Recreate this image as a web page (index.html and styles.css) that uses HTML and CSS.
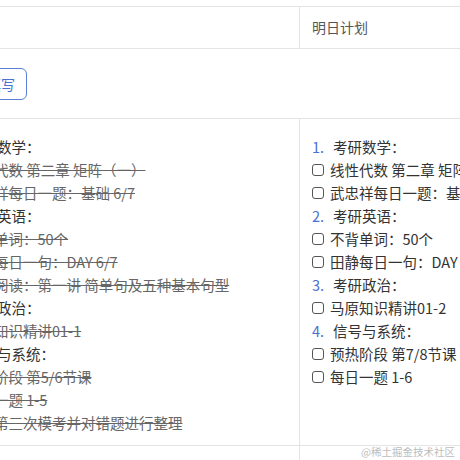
FILE: index.html
```html
<!DOCTYPE html>
<html lang="zh-CN">
<head>
<meta charset="utf-8">
<title>计划</title>
<link rel="stylesheet" href="styles.css">
</head>
<body>
<div class="page">
  <div class="plan-table">
    <div class="cell head left">已完成</div>
    <div class="cell head right">明日计划</div>

    <div class="cell action">
      <button class="btn" type="button">开始填写</button>
    </div>

    <div class="cell body left">
      <div class="line cat"><span class="num">1.</span>考研数学：</div>
      <div class="line item done"><span class="box checked"></span><s>线性代数 第二章 矩阵（一）</s></div>
      <div class="line item done"><span class="box checked"></span><s>武忠祥每日一题：基础 6/7</s></div>
      <div class="line cat"><span class="num">2.</span>考研英语：</div>
      <div class="line item done"><span class="box checked"></span><s>不背单词：50个</s></div>
      <div class="line item done"><span class="box checked"></span><s>田静每日一句：DAY 6/7</s></div>
      <div class="line item done"><span class="box checked"></span><s>唐迟阅读：第一讲 简单句及五种基本句型</s></div>
      <div class="line cat"><span class="num">3.</span>考研政治：</div>
      <div class="line item done"><span class="box checked"></span><s>马原知识精讲01-1</s></div>
      <div class="line cat"><span class="num">4.</span>信号与系统：</div>
      <div class="line item done"><span class="box checked"></span><s>预热阶段 第5/6节课</s></div>
      <div class="line item done"><span class="box checked"></span><s>每日一题 1-5</s></div>
      <div class="line item done"><span class="box checked"></span><s>完成第三次模考并对错题进行整理</s></div>
    </div>

    <div class="cell body right">
      <div class="line cat"><span class="num">1.</span>考研数学：</div>
      <div class="line item"><span class="box"></span>线性代数 第二章 矩阵（二）</div>
      <div class="line item"><span class="box"></span>武忠祥每日一题：基础 7/7</div>
      <div class="line cat"><span class="num">2.</span>考研英语：</div>
      <div class="line item"><span class="box"></span>不背单词：50个</div>
      <div class="line item"><span class="box"></span>田静每日一句：DAY 7/7</div>
      <div class="line cat"><span class="num">3.</span>考研政治：</div>
      <div class="line item"><span class="box"></span>马原知识精讲01-2</div>
      <div class="line cat"><span class="num">4.</span>信号与系统：</div>
      <div class="line item"><span class="box"></span>预热阶段 第7/8节课</div>
      <div class="line item"><span class="box"></span>每日一题 1-6</div>
    </div>

    <div class="cell foot left"></div>
    <div class="cell foot right"></div>
  </div>
  <div class="watermark">@稀土掘金技术社区</div>
</div>
</body>
</html>
```

FILE: styles.css
```css
html, body {
  margin: 0;
  padding: 0;
  background: #ffffff;
}

body {
  width: 460px;
  height: 460px;
  overflow: hidden;
  font-family: "Noto Sans CJK SC", "Noto Sans", sans-serif;
  font-size: 14px;
  color: #333333;
}

.page {
  position: relative;
  width: 460px;
  height: 460px;
  overflow: hidden;
}

.plan-table {
  display: grid;
  grid-template-columns: 365px 368px;
  width: max-content;
  margin: 6px 0 0 -65px;
  border-top: 1px solid #e4e4e4;
}

.cell {
  border-bottom: 1px solid #e4e4e4;
  box-sizing: border-box;
}

.cell.left {
  border-right: 1px solid #e4e4e4;
  padding-left: 12px;
}

.cell.right {
  padding-left: 12px;
}

.head {
  height: 42px;
  line-height: 41px;
  color: #555555;
}

.action {
  grid-column: 1 / 3;
  padding: 19px 12px 18px 12px;
  height: 70px;
}

.btn {
  display: block;
  height: 32px;
  margin: 0;
  padding: 0 11px;
  border: 1px solid #5a7fd6;
  border-radius: 6px;
  background: #ffffff;
  color: #4a70d0;
  font-family: inherit;
  font-size: 14px;
  line-height: 30px;
}

.body {
  padding-top: 16px;
  padding-bottom: 11px;
  font-size: 14.5px;
}

.line {
  display: flex;
  align-items: center;
  height: 23px;
  line-height: 23px;
  white-space: nowrap;
}

.num {
  width: 21px;
  flex: none;
  color: #4a70d0;
}

.box {
  flex: none;
  width: 10px;
  height: 10px;
  border: 1px solid #555555;
  border-radius: 3px;
  margin-right: 6px;
  background: #ffffff;
}

.done s {
  color: #666666;
  text-decoration: line-through;
}

.foot {
  height: 40px;
}

.watermark {
  position: absolute;
  right: 5px;
  bottom: 2px;
  font-size: 10.5px;
  line-height: 12px;
  color: #bdbdbd;
}
```
